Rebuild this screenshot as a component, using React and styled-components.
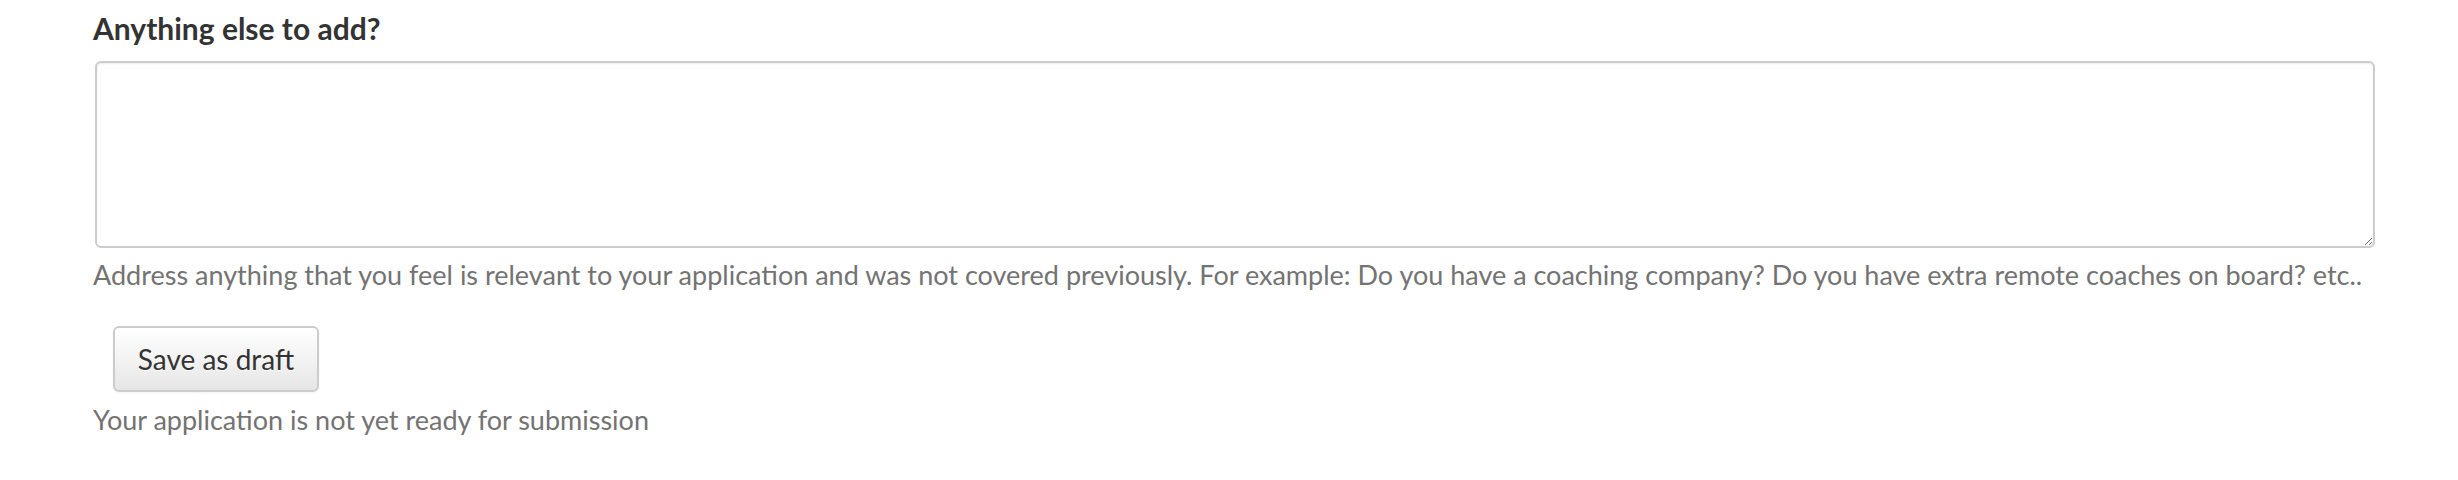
import styled, { createGlobalStyle } from "styled-components";

const GlobalStyle = createGlobalStyle`
  body {
    margin: 0;
    background: #fff;
    font-family: Lato, "Open Sans", sans-serif;
  }
`;

const Container = styled.div`
  padding: 7px 85px 0 93px;
`;

const Label = styled.label`
  display: block;
  font-size: 30px;
  font-weight: 700;
  color: #333;
  line-height: 42px;
  margin-bottom: 12px;
`;

const TextArea = styled.textarea`
  display: block;
  box-sizing: border-box;
  width: 100%;
  height: 187px;
  margin-left: 2px;
  border: 2px solid #ccc;
  border-radius: 6px;
  box-shadow: inset 0 1px 2px rgba(0, 0, 0, 0.08);
  background: #fff;
  resize: vertical;
  font-family: inherit;
`;

const Help = styled.p`
  margin: 9px 0 0;
  font-size: 27px;
  line-height: 36px;
  color: #737373;
`;

const Button = styled.button`
  display: block;
  margin: 33px 0 0 20px;
  width: 206px;
  height: 66px;
  padding: 0;
  font-family: inherit;
  font-size: 28px;
  color: #333;
  text-shadow: 0 1px 0 #fff;
  background: linear-gradient(#fff, #e6e6e6);
  border: 2px solid #ccc;
  border-radius: 6px;
  box-shadow: inset 0 1px 0 rgba(255, 255, 255, 0.2), 0 1px 2px rgba(0, 0, 0, 0.05);
  cursor: pointer;
`;

const Status = styled.p`
  margin: 10px 0 0;
  font-size: 27px;
  line-height: 36px;
  color: #737373;
`;

const App = () => {
  return (
    <Container>
      <GlobalStyle />
      <Label>Anything else to add?</Label>
      <TextArea />
      <Help>
        Address anything that you feel is relevant to your application and was
        not covered previously. For example: Do you have a coaching company? Do
        you have extra remote coaches on board? etc..
      </Help>
      <Button>Save as draft</Button>
      <Status>Your application is not yet ready for submission</Status>
    </Container>
  );
};

export default App;
